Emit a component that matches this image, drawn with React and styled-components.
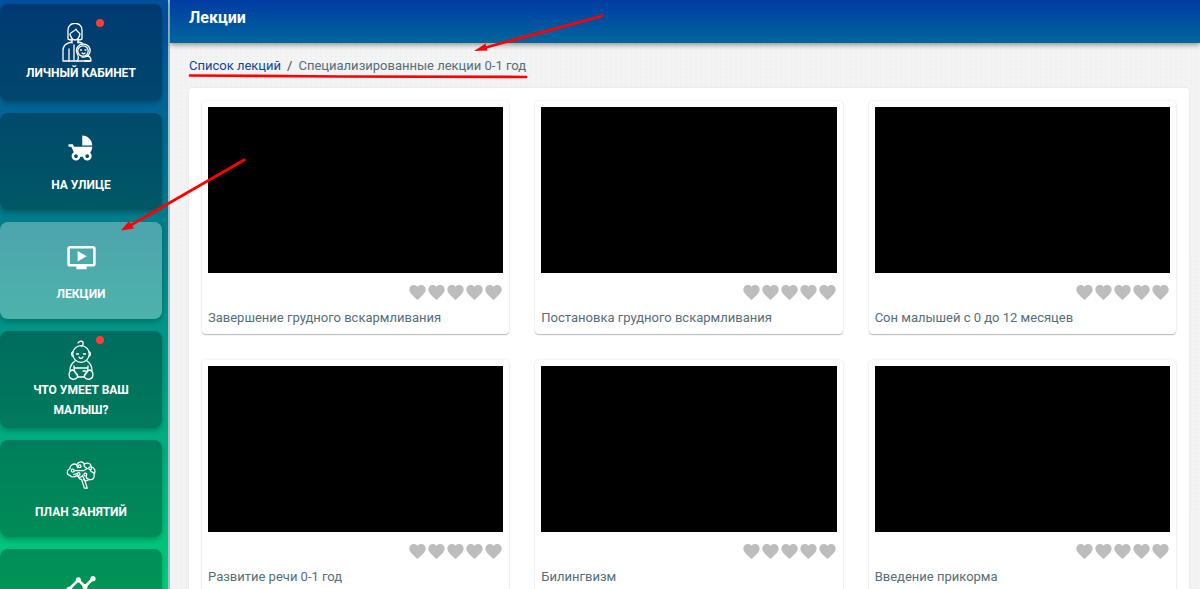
import styled, { createGlobalStyle } from "styled-components";
import { MdChildFriendly, MdOndemandVideo, MdTimeline } from "react-icons/md";

const lectures = [
  "Завершение грудного вскармливания",
  "Постановка грудного вскармливания",
  "Сон малышей с 0 до 12 месяцев",
  "Развитие речи 0-1 год",
  "Билингвизм",
  "Введение прикорма",
];

const MotherIcon = () => (
  <LineIcon viewBox="0 1 40 40" $size={40} aria-hidden="true">
    <path d="M7 17V8c0-9 14-9 14 0v9c-1 1-2 1-4 1M7 17c1 1 2 1 4 1" />
    <path d="M9 12c2-3 4-2 6-5 1 3 3 3 4 5-1 4-3 6-5 6s-4-2-5-6z" />
    <path d="M11 17v4M17 17v4M11 20c-6 1-9 3-9 8v11h27" />
    <path d="M8 27v12M13 23v15M17 20l4 1" />
    <circle cx="22" cy="29" r="5.2" />
    <path d="M16 39c2-2 2-4 0-8-2-5 2-9 6-9 5 0 8 4 7 8-1 3-4 6-8 5M26 34c3 0 4 2 4 5h-6" />
    <path d="M19.500 28h1M24 28h1M21 31c1 1 2 1 3 0" />
  </LineIcon>
);

const BabyIcon = () => (
  <LineIcon viewBox="0 0 40 40" $size={40} aria-hidden="true">
    <path d="M17 3c2-3 6-2 5 1 0 1-1 2-2 2" />
    <circle cx="20" cy="14" r="8.3" />
    <path d="M12 12c-2 0-2 4 0 4M28 12c2 0 2 4 0 4" />
    <path d="M15.500 14h2M22.500 14h2M18 17c1 2 3 2 4 0" />
    <path d="M14 21c-4 3-5 6-5 9M26 21c4 3 5 6 5 9M13 26v2h14v-2M13 28c0 5 3 6 4 9h6c1-3 4-4 4-9" />
    <path d="M12 30c-5 0-5 8-1 9 4 1 7-2 5-5l-4-4M28 30c5 0 5 8 1 9-4 1-7-2-5-5l4-4M22 31h3" />
  </LineIcon>
);

const BrainIcon = () => (
  <LineIcon viewBox="-1 1 33 33" $size={32} aria-hidden="true">
    <path d="M4 18c-4-1-3-6 0-7 0-4 4-6 7-4 2-4 6-4 8-1 4-2 7 0 7 3 4 1 5 5 3 8 1 4-2 6-5 5-2 2-5 2-6 0" />
    <path d="M4 18c2 2 5 2 7 0 2 3 5 2 6 0l2 4 3 9h-3l-3-9c-3 0-3-2-3-4" />
    <path d="M9 13h9c2 0 2-2 4-2M11 7l1 3M19 6c-1 2 0 3 2 4M25 12c0 3 3 2 4 4M21 19c0 2 1 3 3 3M8 17l3-1" />
    <circle cx="14" cy="8.500" r="1.500" />
    <circle cx="7" cy="13" r="1.500" />
    <circle cx="13" cy="16.500" r="1.500" />
    <circle cx="20" cy="17" r="1.500" />
    <circle cx="25" cy="10.500" r="1.500" />
  </LineIcon>
);

const menu = [
  { title: "Личный кабинет", icon: <MotherIcon />, dot: true, variant: "tall" },
  { title: "На улице", icon: <MdChildFriendly size={30} /> },
  { title: "Лекции", icon: <MdOndemandVideo size={31} />, active: true },
  {
    title: "Что умеет ваш малыш?",
    icon: <BabyIcon />,
    dot: true,
    variant: "twoLine",
  },
  { title: "План занятий", icon: <BrainIcon /> },
  { label: "Статистика", icon: <MdTimeline size={32} /> },
];

const Rating = () => (
  <Hearts>
    {[1, 2, 3, 4, 5].map((n) => (
      <Heart key={n} type="button" aria-label={`Оценка ${n}`}>
        <svg viewBox="2 3 20 18.35" width="17" height="15" fill="currentColor">
          <path d="M12 21.350l-1.450-1.320C5.400 15.360 2 12.280 2 8.500 2 5.420 4.420 3 7.500 3c1.740 0 3.410.81 4.500 2.090C13.090 3.810 14.760 3 16.500 3 19.580 3 22 5.420 22 8.500c0 3.780-3.400 6.860-8.550 11.540L12 21.350z" />
        </svg>
      </Heart>
    ))}
  </Hearts>
);

const App = () => {
  return (
    <>
      <GlobalStyle />
      <Layout>
        <Sidebar>
          {menu.map((item) => (
            <Tile
              key={item.title || item.label}
              href="#"
              aria-label={item.label}
              $active={item.active}
            >
              <IconBox $variant={item.variant}>
                {item.icon}
                {item.dot && <Dot $high={item.variant === "twoLine"} />}
              </IconBox>
              {item.title && <TileTitle>{item.title}</TileTitle>}
            </Tile>
          ))}
        </Sidebar>
        <Main>
          <Header>
            <h1>Лекции</h1>
          </Header>
          <Breadcrumbs>
            <a href="#">Список лекций</a>
            <i>/</i>
            <span>Специализированные лекции 0-1 год</span>
          </Breadcrumbs>
          <Panel>
            {lectures.map((title) => (
              <Card key={title}>
                <Video />
                <Rating />
                <CardTitle>{title}</CardTitle>
              </Card>
            ))}
          </Panel>
        </Main>
      </Layout>
      <Marks width="620" height="240" aria-hidden="true">
        <path d="M190 75.500L340 76.500L526 77" />
        <path d="M602 16L484 48M244 160L131 225" />
        <path d="M474 51L485.500 43.500L487.500 50.500zM121 230.500L129 221L134 228.500z" fill="#f00" stroke="none" />
      </Marks>
    </>
  );
};

const GlobalStyle = createGlobalStyle`
  * {
    box-sizing: border-box;
  }
  body {
    margin: 0;
    font-family: Roboto, "Liberation Sans", sans-serif;
    overflow: hidden;
  }
`;

const Layout = styled.div`
  display: flex;
  height: 100vh;
  overflow: hidden;
`;

const Sidebar = styled.nav`
  display: flex;
  flex: 0 0 170px;
  flex-direction: column;
  gap: 12px;
  padding: 4px 6px 0 0;
  border-right: 2px solid #9cc3cc;
  background: linear-gradient(#004f9f 0%, #00808a 40%, #00ce78 100%);
  overflow: hidden;
`;

const Tile = styled.a`
  display: flex;
  flex: 0 0 97px;
  flex-direction: column;
  align-items: center;
  border-radius: 8px;
  background: ${(p) =>
    p.$active ? "rgba(255, 255, 255, 0.3)" : "rgba(0, 0, 0, 0.28)"};
  box-shadow: 0 3px 5px rgba(0, 0, 0, 0.22);
  color: #fff;
  text-decoration: none;
`;

const boxHeights = { tall: 59, twoLine: 49 };
const boxPaddings = { tall: 18, twoLine: 8 };

const IconBox = styled.span`
  position: relative;
  display: flex;
  flex-shrink: 0;
  align-items: center;
  justify-content: center;
  width: 48px;
  height: ${(p) => boxHeights[p.$variant] || 62}px;
  padding-top: ${(p) => boxPaddings[p.$variant] || 8}px;
`;

const Dot = styled.span`
  position: absolute;
  top: ${(p) => (p.$high ? 5 : 15)}px;
  right: 1px;
  width: 8px;
  height: 8px;
  border-radius: 50%;
  background: #f44336;
`;

const TileTitle = styled.span`
  padding: 0 20px;
  font-size: 12px;
  font-weight: 700;
  line-height: 20px;
  text-align: center;
  text-transform: uppercase;
`;

const LineIcon = styled.svg`
  width: ${(p) => p.$size}px;
  height: ${(p) => p.$size}px;
  flex-shrink: 0;
  fill: none;
  stroke: currentColor;
  stroke-width: 1.3;
  stroke-linecap: round;
  stroke-linejoin: round;
`;

const Main = styled.main`
  flex: 1;
  min-width: 0;
  background: repeating-linear-gradient(
      90deg,
      rgba(0, 0, 0, 0.006) 0 2px,
      transparent 2px 5px
    ),
    repeating-linear-gradient(rgba(0, 0, 0, 0.006) 0 1px, transparent 1px 4px),
    #f4f4f4;
`;

const Header = styled.header`
  display: flex;
  height: 43px;
  padding: 8px 19px;
  background: linear-gradient(#003ca3, #00669d);
  box-shadow: 0 2px 5px rgba(0, 0, 0, 0.4);
  color: #fff;

  h1 {
    margin: 0;
    font-size: 16px;
    font-weight: 700;
    line-height: 20px;
  }
`;

const Breadcrumbs = styled.nav`
  display: flex;
  gap: 6px;
  padding: 13px 19px 12px;
  color: #546e7a;
  font-size: 13px;
  line-height: 20px;

  a {
    color: #0d47a1;
    text-decoration: none;
  }
  i {
    color: #37474f;
    font-style: normal;
  }
`;

const Panel = styled.section`
  display: grid;
  grid-template-columns: repeat(3, minmax(0, 1fr));
  gap: 26px;
  margin: 0 11px 0 19px;
  padding: 13px;
  border-radius: 4px;
  background: #fff;
  box-shadow: 0 0 3px rgba(0, 0, 0, 0.08);
`;

const Card = styled.article`
  display: flex;
  flex-direction: column;
  padding: 6px;
  border-radius: 4px;
  background: #fff;
  box-shadow: 0 1px 1px rgba(0, 0, 0, 0.25), 0 0 3px rgba(0, 0, 0, 0.1);
`;

const Video = styled.div`
  aspect-ratio: 16 / 9;
  background: #000;
`;

const Hearts = styled.div`
  display: flex;
  justify-content: flex-end;
  gap: 2px;
  padding: 12px 1px 8px;
`;

const Heart = styled.button`
  display: flex;
  padding: 0;
  border: 0;
  background: none;
  color: #bdbdbd;
  cursor: pointer;
`;

const CardTitle = styled.h2`
  margin: 0;
  color: #546e7a;
  font-size: 13px;
  font-weight: 400;
  line-height: 20px;
`;

const Marks = styled.svg`
  position: absolute;
  top: 0;
  left: 0;
  pointer-events: none;
  fill: none;
  stroke: #f00;
  stroke-width: 2.7;
  stroke-linecap: round;
`;

export default App;
